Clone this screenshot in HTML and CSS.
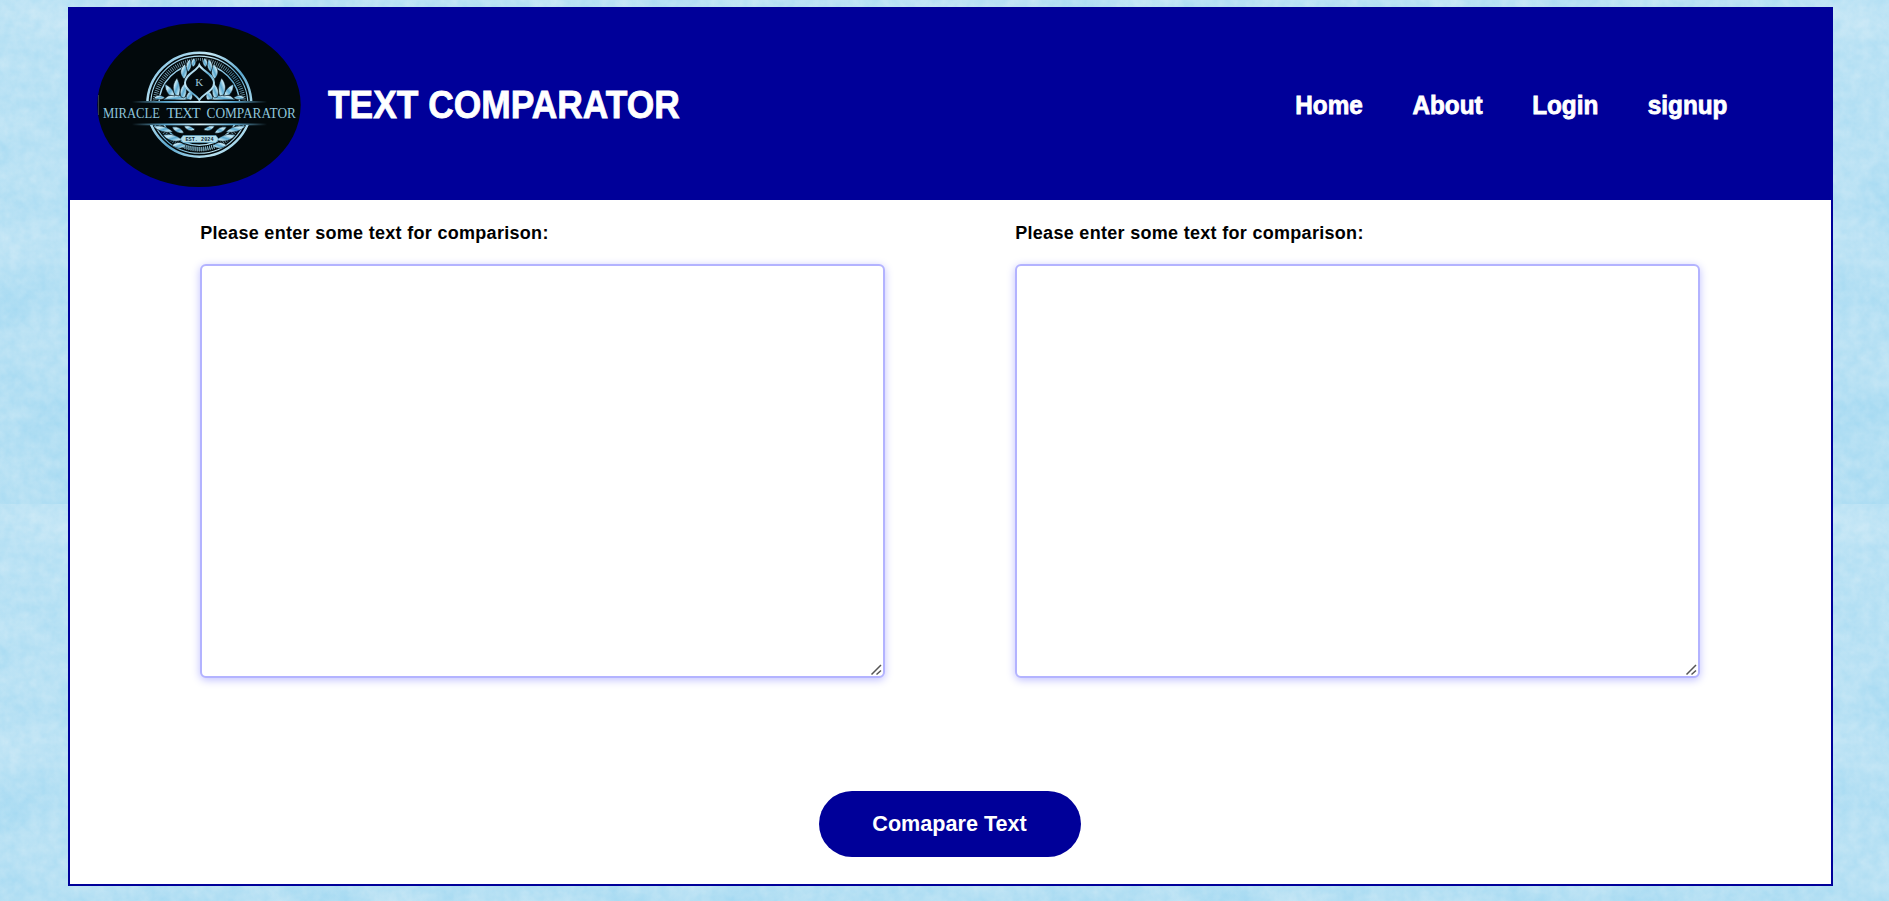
FILE: index.html
```html
<!DOCTYPE html>
<html lang="en">
<head>
<meta charset="utf-8">
<title>Text Comparator</title>
<link rel="stylesheet" href="styles.css">
</head>
<body>
<div class="container">
  <header class="header">
    <svg class="logo" viewBox="97 23 204 164" aria-label="Miracle Text Comparator">
      <defs>
        <linearGradient id="metal" x1="0" y1="0" x2="1" y2="1">
          <stop offset="0" stop-color="#6bb4dc"/><stop offset=".3" stop-color="#c5e8f5"/>
          <stop offset=".55" stop-color="#5ba8cf"/><stop offset=".8" stop-color="#b9e2f1"/><stop offset="1" stop-color="#73b7d8"/>
        </linearGradient>
        <linearGradient id="bar">
          <stop offset="0" stop-color="#73b7d8" stop-opacity="0"/><stop offset=".25" stop-color="#5ba8d0"/>
          <stop offset=".5" stop-color="#d5f1fa"/><stop offset=".75" stop-color="#5ba8d0"/><stop offset="1" stop-color="#73b7d8" stop-opacity="0"/>
        </linearGradient>
        <clipPath id="bands"><path d="M140 45h118v56H140zM140 125h118v40H140z"/></clipPath>
        <g id="branch">
          <path d="M163 100C171 99 182 101 192 99C184 95 174 94 168 96Z"/>
          <path d="M169 95C166 91 165 88 165 84C171 87 174 91 175 96Z"/>
          <path d="M175 95C172 88 173 83 177 78C180 84 181 90 179 96Z"/>
          <path d="M181 97C179 91 181 87 185 83C187 89 187 95 184 98Z"/>
          <path d="M186 99C186 95 188 92 191 91C193 95 193 98 191 100Z"/>
          <path d="M154 98C157 94 162 95 165 98C161 100 157 100 154 98Z"/>
          <path d="M184 79C179 74 180 68 185 64C188 70 188 75 184 79Z"/>
          <path d="M188 72C185 67 186 62 190 59C192 64 192 68 188 72Z"/>
          <path d="M193 67C190 64 191 60 194 58C197 61 196 65 193 67Z"/>
          <path d="M153 126C161 125 168 127 173 132C164 133 158 131 153 126Z"/>
          <path d="M172 127C178 126 182 129 184 133C178 134 174 131 172 127Z"/>
          <path d="M184 126C189 125 193 127 195 130C190 132 186 130 184 126Z"/>
          <path d="M163 135C171 133 178 136 182 140C174 143 167 140 163 135Z"/>
          <path d="M172 145C178 141 182 142 186 146C181 149 176 149 172 145Z"/>
        </g>
      </defs>
      <ellipse cx="199" cy="105" rx="101.7" ry="82" fill="#02090c"/>
      <path d="M98.5 95v20" stroke="#434b4d" stroke-width=".8"/>
      <g clip-path="url(#bands)" fill="none" stroke="url(#metal)">
        <circle cx="199.3" cy="104.7" r="52" stroke-width="2.5"/>
        <circle cx="199.3" cy="104.7" r="48.6" stroke-width="1.1"/>
        <circle cx="199.3" cy="104.7" r="44.5" stroke-width="4.5" stroke-dasharray=".8 1.3" stroke-opacity=".75"/>
        <circle cx="199.3" cy="104.7" r="40.5" stroke-width="1.5"/>
      </g>
      <path d="M162 101C174 89 180 70 199 60C218 70 224 89 236 101Z" fill="#02090c"/>
      <g fill="url(#metal)" stroke="#02090c" stroke-width=".55">
        <use href="#branch"/>
        <use href="#branch" transform="translate(398.6 0) scale(-1 1)"/>
      </g>
      <path d="M199.3 65C197 71 185 74 185 83C185 91 195 93 199.3 100C204 93 214 91 214 83C214 74 202 71 199.3 65Z" fill="#02090c" stroke="url(#metal)" stroke-width="2"/>
      <rect x="132" y="101" width="135" height="1.8" fill="url(#bar)"/>
      <rect x="132" y="123.5" width="135" height="1.8" fill="url(#bar)"/>
      <path d="M199.3 126l-4 5h2v3h4v-3h2z" fill="#02090c"/>
      <path d="M183 135.5h33l2.5 3.5-2.5 3.5h-33l-2.5-3.5z" fill="#b4ddea" stroke="#5ba4c9" stroke-width=".6"/>
      <path d="M184 146q15 6 31 0" fill="none" stroke="#8cc4dc" stroke-width="4" stroke-dasharray=".8 1.2"/>
      <text class="logo-letter" x="199.3" y="86">K</text>
      <text class="logo-year" x="185.5" y="141.2" textLength="28" lengthAdjust="spacingAndGlyphs">EST. 2024</text>
      <text class="logo-name" x="103" y="117.8" textLength="57" lengthAdjust="spacingAndGlyphs">MIRACLE</text>
      <text class="logo-name" x="166.5" y="117.8" textLength="34">TEXT</text>
      <text class="logo-name" x="206.5" y="117.8" textLength="89.5" lengthAdjust="spacingAndGlyphs">COMPARATOR</text>
    </svg>
    <h1 class="title">TEXT COMPARATOR</h1>
    <nav class="nav">
      <a class="nav-link">Home</a>
      <a class="nav-link">About</a>
      <a class="nav-link">Login</a>
      <a class="nav-link">signup</a>
    </nav>
  </header>
  <main class="main">
    <div class="fields">
      <div class="field">
        <label class="label" for="first">Please enter some text for comparison:</label>
        <textarea class="input" id="first"></textarea>
      </div>
      <div class="field">
        <label class="label" for="second">Please enter some text for comparison:</label>
        <textarea class="input" id="second"></textarea>
      </div>
    </div>
    <button class="compare" type="button">Comapare Text</button>
  </main>
</div>
</body>
</html>
```
FILE: styles.css
```css
* { box-sizing: border-box; }
body {
  margin: 0;
  height: 901px;
  padding-top: 7px;
  overflow: hidden;
  font-family: "Liberation Sans", Arial, sans-serif;
  background: #b7e1f5 url("data:image/svg+xml,%3Csvg xmlns='http://www.w3.org/2000/svg' width='900' height='504'%3E%3Cdefs%3E%3Cfilter id='a' x='0' y='0' width='100%25' height='100%25' color-interpolation-filters='sRGB'%3E%3CfeTurbulence type='fractalNoise' baseFrequency='.014 .018' numOctaves='5' seed='8'/%3E%3CfeColorMatrix values='.28 0 0 0 .58 .11 0 0 0 .825 .03 0 0 0 .94 0 0 0 0 1'/%3E%3C/filter%3E%3Cfilter id='b' x='0' y='0' width='100%25' height='100%25' color-interpolation-filters='sRGB'%3E%3CfeTurbulence type='fractalNoise' baseFrequency='.1' numOctaves='3' seed='3'/%3E%3CfeColorMatrix values='.32 0 0 0 .56 .13 0 0 0 .815 .04 0 0 0 .935 0 0 0 0 .4'/%3E%3C/filter%3E%3ClinearGradient id='g' x2='0' y2='1'%3E%3Cstop stop-color='%23c4e8f7'/%3E%3Cstop offset='.55' stop-color='%23b7e2f5'/%3E%3Cstop offset='1' stop-color='%23a5dbf2'/%3E%3C/linearGradient%3E%3C/defs%3E%3Crect width='900' height='504' filter='url(%23a)'/%3E%3Crect width='900' height='504' filter='url(%23b)'/%3E%3Crect width='900' height='504' fill='url(%23g)' opacity='.25'/%3E%3C/svg%3E");
}
.container {
  width: 1765px;
  height: 879px;
  margin-left: 68px;
  border: 2px solid #000099;
  background: #fff;
}
.header {
  display: flex;
  align-items: center;
  height: 191px;
  padding: 0 104px 0 27px;
  background: #000099;
}
.logo { width: 204px; height: 164px; margin-top: 1px; flex: none; }
.logo-letter { font: 11px "Liberation Serif", serif; fill: #9bc8da; text-anchor: middle; }
.logo-year { font: bold 6px "Liberation Mono", monospace; fill: #08202b; }
.logo-name { font: 14.5px "Liberation Serif", serif; fill: #8fc5db; }
.title {
  width: 400px;
  margin: 1px 0 0 27px;
  color: #fff;
  font-size: 39px;
  line-height: 46px;
  white-space: nowrap;
  transform: scaleX(.907);
  transform-origin: left center;
  -webkit-text-stroke: .8px #fff;
}
.nav {
  display: flex;
  gap: 52px;
  margin-left: auto;
  transform: scaleX(.953);
  transform-origin: right center;
}
.nav-link {
  color: #fff;
  font-size: 25.5px;
  font-weight: bold;
  line-height: 32px;
  -webkit-text-stroke: .8px #fff;
}
.main { display: flex; flex-direction: column; align-items: center; }
.fields { display: flex; gap: 130px; padding: 21px 1px 0 0; margin-right: 1px; }
.field { display: flex; flex-direction: column; width: 685px; }
.label {
  font-size: 18px;
  font-weight: bold;
  line-height: 24px;
  letter-spacing: .3px;
  margin: 0 0 19px .7px;
}
.input {
  height: 414px;
  border: 2px solid #b3b3ff;
  border-radius: 6px;
  outline: none;
  box-shadow: 0 2px 8px rgba(0, 0, 255, .25);
  resize: both;
}
.input::-webkit-resizer {
  background: url("data:image/svg+xml,%3Csvg xmlns='http://www.w3.org/2000/svg' width='15' height='15'%3E%3Cpath d='M3.5 13.5L13 4M8.5 13.5L13 9.5' stroke='%23555' stroke-width='1.5'/%3E%3C/svg%3E") right bottom no-repeat;
}
.compare {
  width: 262px;
  height: 66px;
  margin: 113px 2px 0 0;
  border: 0;
  border-radius: 33px;
  background: #000099;
  color: #fff;
  font: bold 21.6px "Liberation Sans", Arial, sans-serif;
}
```
